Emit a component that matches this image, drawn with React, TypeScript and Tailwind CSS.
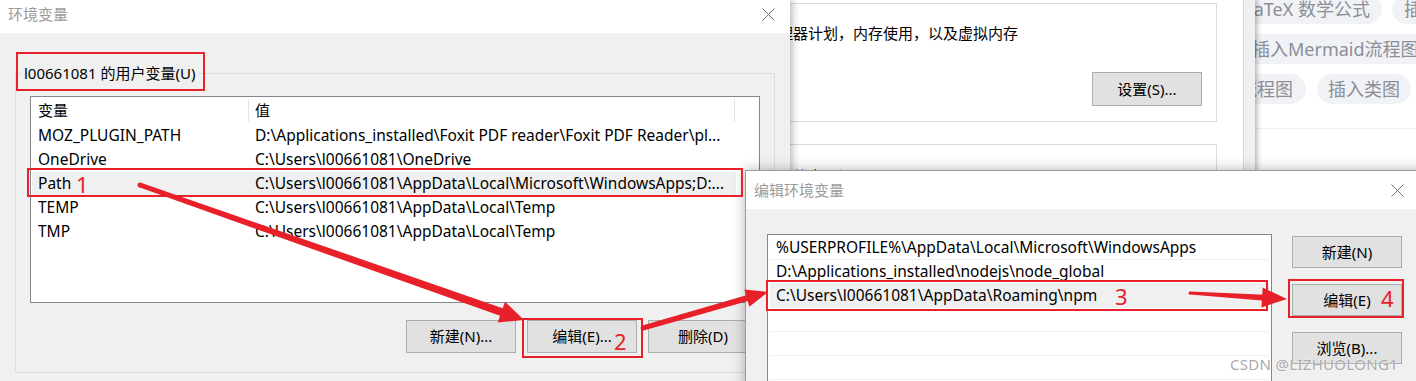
import React from "react"

const font = "font-['Noto_Sans','Noto_Sans_CJK_SC',sans-serif]"

const userVars = [
	["MOZ_PLUGIN_PATH", "D:\\Applications_installed\\Foxit PDF reader\\Foxit PDF Reader\\pl..."],
	["OneDrive", "C:\\Users\\l00661081\\OneDrive"],
	["Path", "C:\\Users\\l00661081\\AppData\\Local\\Microsoft\\WindowsApps;D:..."],
	["TEMP", "C:\\Users\\l00661081\\AppData\\Local\\Temp"],
	["TMP", "C:\\Users\\l00661081\\AppData\\Local\\Temp"],
]

const pathEntries = [
	"%USERPROFILE%\\AppData\\Local\\Microsoft\\WindowsApps",
	"D:\\Applications_installed\\nodejs\\node_global",
	"C:\\Users\\l00661081\\AppData\\Roaming\\npm",
	"",
	"",
	"",
]

type Pt = [number, number]

// tapered shaft + triangle head
const arrowShape = (a: Pt, tip: Pt, w1: number, w2: number, len: number, half: number) => {
	const dx = tip[0] - a[0]
	const dy = tip[1] - a[1]
	const d = Math.hypot(dx, dy)
	const ux = dx / d
	const uy = dy / d
	const px = -uy
	const py = ux
	const bx = tip[0] - ux * len
	const by = tip[1] - uy * len
	const sx = bx + ux * 3
	const sy = by + uy * 3
	const shaft: Pt[] = [
		[a[0] + (px * w1) / 2, a[1] + (py * w1) / 2],
		[sx + (px * w2) / 2, sy + (py * w2) / 2],
		[sx - (px * w2) / 2, sy - (py * w2) / 2],
		[a[0] - (px * w1) / 2, a[1] - (py * w1) / 2],
	]
	const head: Pt[] = [tip, [bx + px * half, by + py * half], [bx - px * half, by - py * half]]
	const str = (p: Pt[]) => p.map((q) => q.join(",")).join(" ")
	return { shaft: str(shaft), head: str(head), start: a, r: w1 / 2 }
}

const arrows = [
	arrowShape([140, 185], [524, 320], 5, 8, 24, 11),
	arrowShape([643, 328], [768, 292], 5, 6, 22, 9),
	arrowShape([1190, 293], [1287, 299], 3, 6, 25, 10),
]

const CloseIcon = () => (
	<svg width="13" height="13" viewBox="0 0 13 13" className="shrink-0">
		<path d="M0.5 0.5L12.5 12.5M12.5 0.5L0.5 12.5" stroke="#707070" strokeWidth="1" />
	</svg>
)

const WinButton = ({ children, className = "" }: { children: React.ReactNode; className?: string }) => (
	<div
		className={`flex w-[110px] items-center justify-center border border-[#adadad] bg-[#e1e1e1] text-[15px] text-black ${className}`}>
		{children}
	</div>
)

const Chip = ({ children, className = "" }: { children: React.ReactNode; className?: string }) => (
	<div
		className={`flex h-[30px] shrink-0 items-center whitespace-nowrap rounded-full bg-[#f1f2f6] text-[18px] text-[#8a8f99] ${className}`}>
		{children}
	</div>
)

export default function App() {
	return (
		<div className={`relative h-[381px] w-[1416px] overflow-hidden bg-white text-black ${font}`}>
			{/* Browser page behind everything */}
			<div className="absolute left-[1180px] top-0 h-[170px] w-[236px] bg-white">
				<div className="-mt-[6px] flex flex-col gap-[10px]">
					<div className="ml-[40px] flex gap-[10px]">
						<Chip className="w-[162px] justify-end pr-[12px]">LaTeX 数学公式</Chip>
						<Chip className="w-[110px] pl-[12px]">插入甘特图</Chip>
					</div>
					<div className="ml-[58px] flex">
						<Chip className="w-[200px] pl-[14px]">插入Mermaid流程图</Chip>
					</div>
					<div className="ml-[6px] flex gap-[11px]">
						<Chip className="w-[120px] justify-end pr-[13px]">插入流程图</Chip>
						<Chip className="w-[94px] justify-center">插入类图</Chip>
					</div>
				</div>
				<div className="mt-[24px] ml-[75px] h-px bg-[#eeeeee]" />
			</div>

			{/* System properties window */}
			<div className="absolute left-[670px] top-0 z-10 flex h-[381px] w-[585px] shadow-[2px_0_5px_rgba(0,0,0,0.3)]">
				<div className="flex flex-1 flex-col bg-white">
					<div className="ml-[10px] mt-[3px] h-[121px] w-[537px] border border-[#dcdcdc]">
						<div className="mt-[19px] whitespace-nowrap pl-[7px] text-[15px] leading-[20px]">
							视觉效果，处理器计划，内存使用，以及虚拟内存
						</div>
						<div className="mt-[29px] flex justify-end pr-[14px]">
							<WinButton className="h-[34px]">设置(S)...</WinButton>
						</div>
					</div>
					<div className="ml-[10px] mt-[22px] h-[240px] w-[537px] border border-[#dcdcdc]">
						<div className="mt-[21px] whitespace-nowrap pl-[7px] text-[15px] leading-[20px]">
							与登录帐户相关的桌面设置
						</div>
					</div>
				</div>
				<div className="w-[12px] border-l border-[#d9d9d9] bg-[#f0f0f0]" />
			</div>

			{/* 环境变量 window */}
			<div className="absolute left-0 top-0 z-20 flex h-[381px] w-[790px] flex-col bg-[#f0f0f0] shadow-[2px_0_8px_rgba(0,0,0,0.3)]">
				<div className="flex h-[33px] shrink-0 items-center justify-between bg-white pb-[5px] pl-[8px] pr-[15px]">
					<span className="text-[15px] text-[#9b9b9b]">环境变量</span>
					<CloseIcon />
				</div>
				<div className="relative ml-[15px] mt-[40px] h-[300px] w-[760px] border border-[#dcdcdc]">
					<span className="absolute -top-[11px] left-[5px] bg-[#f0f0f0] px-[3px] text-[15px] leading-[20px]">
						l00661081 的用户变量(U)
					</span>
					<div className="ml-[14px] mt-[22px] h-[207px] w-[730px] border border-[#828790] bg-white">
						<div className="flex h-[27px] items-center text-[15px]">
							<div className="flex h-[23px] w-[218px] items-center border-r border-[#e5e5e5] pl-[7px]">变量</div>
							<div className="flex h-[23px] w-[486px] items-center border-r border-[#e5e5e5] pl-[6px]">值</div>
						</div>
						{userVars.map(([name, value]) => (
							<div
								key={name}
								className={`ml-[1px] flex h-[24px] w-[704px] items-center whitespace-nowrap text-[15.5px] ${name === "Path" ? "bg-[#f0f0f0]" : ""}`}>
								<div className="w-[217px] pl-[6px]">{name}</div>
								<div className="pl-[6px]">{value}</div>
							</div>
						))}
					</div>
					<div className="mt-[17px] flex justify-end gap-[11px] pr-[16px]">
						<WinButton className="h-[33px]">新建(N)...</WinButton>
						<WinButton className="h-[33px]">编辑(E)...</WinButton>
						<WinButton className="h-[33px]">删除(D)</WinButton>
					</div>
				</div>
			</div>

			{/* 编辑环境变量 dialog */}
			<div className="absolute left-[745px] top-[170px] z-30 flex h-[230px] w-[690px] flex-col border border-[#9a9a9a] bg-[#f0f0f0] shadow-[0_0_12px_rgba(0,0,0,0.3)]">
				<div className="flex h-[38px] shrink-0 items-center justify-between bg-white pl-[8px] pr-[30px]">
					<span className="text-[15px] text-[#9b9b9b]">编辑环境变量</span>
					<CloseIcon />
				</div>
				<div className="flex gap-[20px] pl-[21px] pt-[25px]">
					<div className="h-[170px] w-[505px] border border-[#828790] bg-white pt-[1px]">
						{pathEntries.map((p, i) => (
							<div
								key={i}
								className={`mx-[2px] flex h-[24px] items-center border-b border-[#f0f0f0] pl-[6px] text-[15.5px] whitespace-nowrap ${i === 2 ? "bg-[#f0f0f0]" : ""}`}>
								{p}
							</div>
						))}
					</div>
					<div className="mt-[2px] flex flex-col gap-[16px]">
						<WinButton className="h-[32px]">新建(N)</WinButton>
						<WinButton className="h-[32px]">编辑(E)</WinButton>
						<WinButton className="h-[32px]">浏览(B)...</WinButton>
					</div>
				</div>
			</div>

			{/* Annotations */}
			<div className="absolute left-[16px] top-[52px] z-40 h-[39px] w-[189px] border-2 border-[#e8202a]" />
			<div className="absolute left-[27px] top-[168px] z-40 h-[29px] w-[716px] border-2 border-[#e8202a]" />
			<div className="absolute left-[522px] top-[318px] z-40 h-[40px] w-[121px] border-2 border-[#e8202a]" />
			<div className="absolute left-[766px] top-[280px] z-40 h-[31px] w-[502px] border-2 border-[#e8202a]" />
			<div className="absolute left-[1288px] top-[279px] z-40 h-[39px] w-[116px] border-2 border-[#e8202a]" />

			<span className="absolute left-[76px] top-[170px] z-40 text-[22px] leading-[28px] text-[#e8202a]">1</span>
			<span className="absolute left-[614px] top-[327px] z-40 text-[22px] leading-[28px] text-[#e8202a]">2</span>
			<span className="absolute left-[1115px] top-[282px] z-40 text-[22px] leading-[28px] text-[#e8202a]">3</span>
			<span className="absolute left-[1381px] top-[284px] z-40 text-[22px] leading-[28px] text-[#e8202a]">4</span>

			<svg className="pointer-events-none absolute left-0 top-0 z-40" width="1416" height="381" viewBox="0 0 1416 381">
				{arrows.map((a, i) => (
					<g key={i} fill="#e8202a">
						<circle cx={a.start[0]} cy={a.start[1]} r={a.r} />
						<polygon points={a.shaft} />
						<polygon points={a.head} />
					</g>
				))}
			</svg>

			<span className="absolute left-[1230px] top-[354px] z-40 whitespace-nowrap text-[15px] leading-[20px] tracking-[0.3px] text-[#ababab] [text-shadow:0_0_2px_#ffffff]">
				CSDN @LIZHUOLONG1
			</span>
		</div>
	)
}
